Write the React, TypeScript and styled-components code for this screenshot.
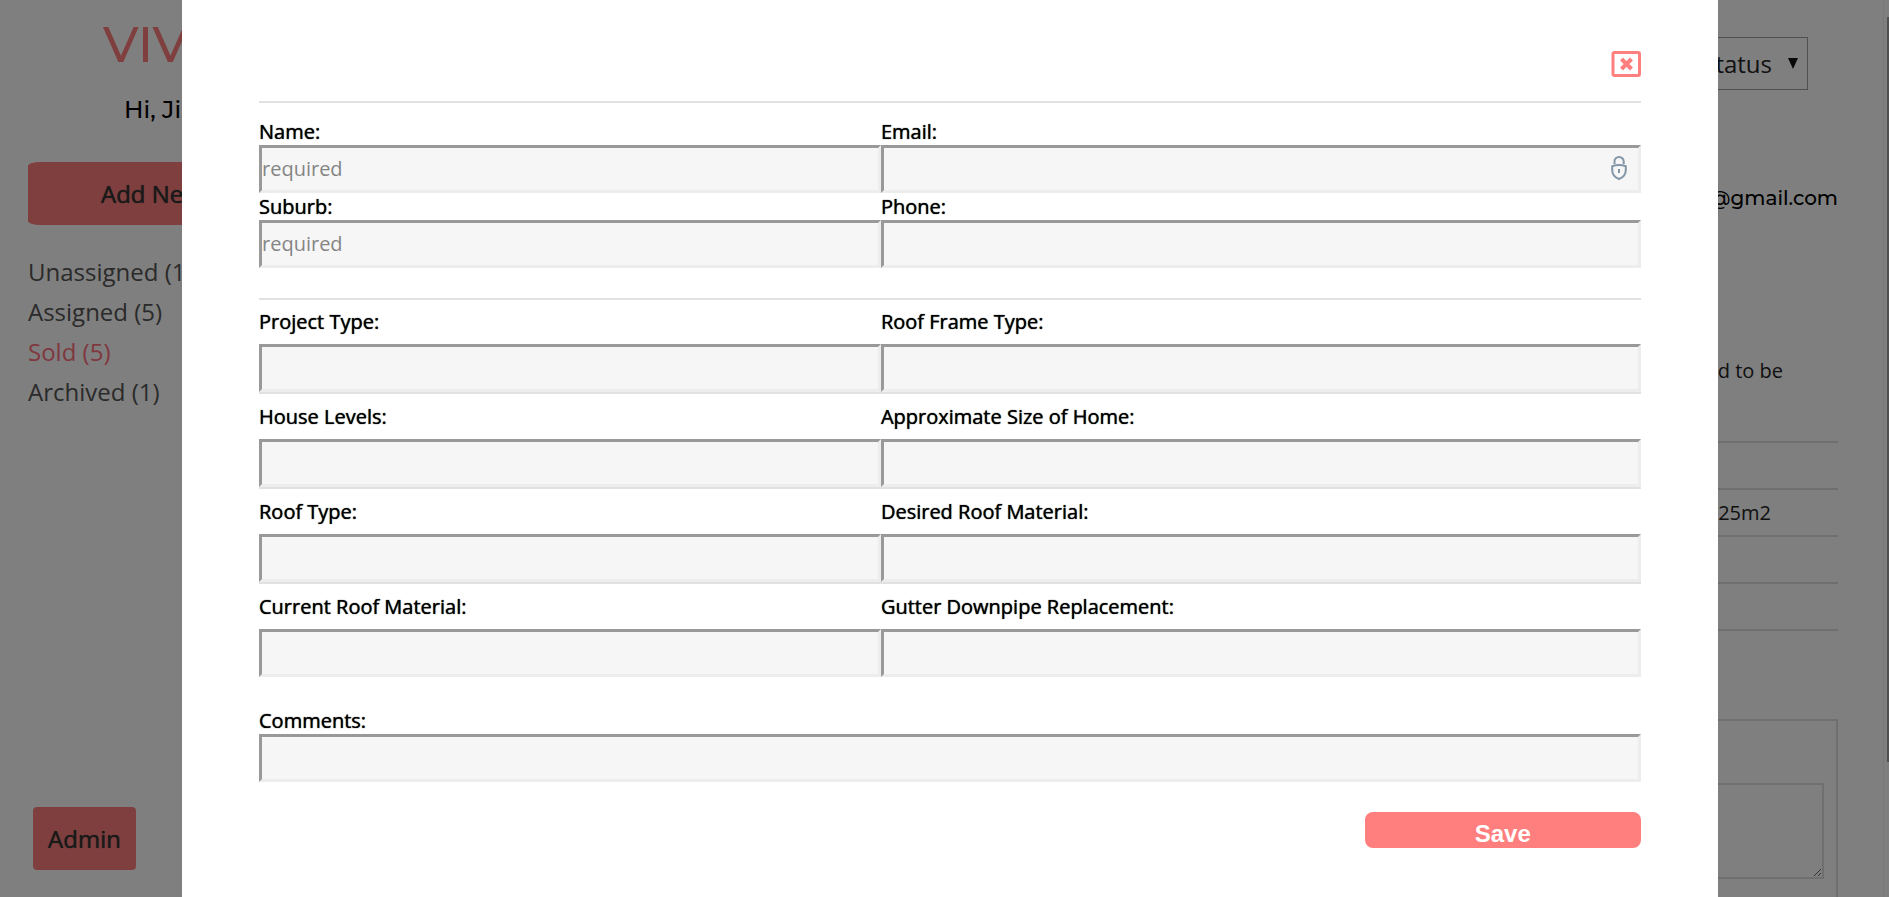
import React from "react";
import styled, { createGlobalStyle } from "styled-components";

const GlobalStyle = createGlobalStyle`
  * { box-sizing: border-box; }
  body { margin: 0; background: #fff; font-family: "Open Sans", sans-serif; overflow: hidden; }
`;

const Page = styled.div`
  display: flex;
  height: 100vh;
  overflow: hidden;
`;

const Sidebar = styled.aside`
  display: flex;
  flex-direction: column;
  width: 320px;
  padding: 17px 0 27px 28px;
`;

const Brand = styled.h1`
  margin: 0;
  padding-left: 75px;
  font: 500 50px/56px Montserrat, Lato, sans-serif;
  color: #ff7f7f;
`;

const Greeting = styled.p`
  margin: 22px 0 0;
  padding-left: 96px;
  font: 500 24px/30px Montserrat, "Open Sans", sans-serif;
  color: #000;
`;

const AddButton = styled.button`
  height: 63px;
  margin-top: 37px;
  padding: 0 0 0 73px;
  border: 0;
  border-radius: 12px / 4px;
  background: #ff7f7f;
  color: #333;
  font: 400 24px/32px "Open Sans", sans-serif;
  text-shadow: 0 0 1px #333;
  text-align: left;
`;

const Nav = styled.nav`
  display: flex;
  flex-direction: column;
  margin-top: 27px;
`;

const NavLink = styled.a<{ $active?: boolean }>`
  font-size: 24px;
  line-height: 40px;
  text-decoration: none;
  color: ${(p) => (p.$active ? "#ff7080" : "#555")};
`;

const AdminButton = styled.button`
  align-self: flex-start;
  width: 103px;
  height: 63px;
  margin: auto 0 0 5px;
  padding: 0;
  border: 0;
  border-radius: 4px;
  background: #ff7f7f;
  color: #333;
  font: 400 24px/32px "Open Sans", sans-serif;
  text-shadow: 0 0 1px #333;
`;

const Main = styled.main`
  flex: 1;
  display: flex;
  flex-direction: column;
  padding: 37px 45px 0 0;
`;

const SelectFrame = styled.div`
  align-self: flex-end;
  display: flex;
  align-items: center;
  width: 240px;
  height: 53px;
  margin-right: 30px;
  padding-right: 9px;
  border: 1px solid #a0a0a0;
`;

const StatusSelect = styled.select`
  flex: 1;
  appearance: none;
  border: 0;
  background: transparent;
  color: #222;
  font: 400 24px/34px "Open Sans", sans-serif;
  text-align: right;
  text-align-last: right;
  padding: 0 8px 0 0;
`;

const Contact = styled.p`
  margin: 93px 0 0;
  font: 500 20px/30px Montserrat, "Open Sans", sans-serif;
  color: #000;
  text-align: right;
`;

const Note = styled.p`
  margin: 143px 0 0;
  padding-right: 55px;
  font-size: 20px;
  line-height: 30px;
  color: #222;
  text-align: right;
`;

const Details = styled.ul`
  margin: 55px 0 0;
  padding: 0;
  list-style: none;
  border-bottom: 2px solid #dedede;
`;

const Detail = styled.li`
  height: 47px;
  padding-right: 67px;
  border-top: 2px solid #dedede;
  font-size: 20px;
  line-height: 45px;
  color: #222;
  text-align: right;
`;

const NoteBox = styled.section`
  flex: 1;
  margin-top: 88px;
  padding: 62px 12px 0;
  border: 2px solid #dedede;
  border-bottom: 0;
`;

const NoteArea = styled.textarea`
  display: block;
  width: 100%;
  height: 96px;
  border: 2px solid #dedede;
  background: transparent;
`;

const ScrollTrack = styled.div`
  width: 6px;
  padding: 17px 0 0 3px;
  border-left: 1px solid #f2f2f2;
`;

const ScrollThumb = styled.div`
  height: 745px;
  background: #a0a0a0;
`;

const Overlay = styled.div`
  position: fixed;
  inset: 0;
  display: flex;
  padding: 0 171px 0 182px;
  background: rgba(0, 0, 0, 0.5);
`;

const Modal = styled.div`
  flex: 1;
  padding: 51px 77px 0;
  background: #fff;
`;

const ModalHeader = styled.header`
  display: flex;
  justify-content: flex-end;
  height: 52px;
  border-bottom: 2px solid #e1e1e1;
`;

const CloseButton = styled.button`
  width: 30px;
  height: 26px;
  padding: 0;
  border: 0;
  background: none;
  svg { display: block; }
`;

const ContactFields = styled.div`
  padding: 15px 0 30px;
  border-bottom: 2px solid #e1e1e1;
`;

const ProjectFields = styled.div`
  display: grid;
  row-gap: 1px;
`;

const FieldRow = styled.div<{ $ruled?: boolean }>`
  display: grid;
  grid-template-columns: 45% 55%;
  border-bottom: ${(p) => (p.$ruled ? "2px solid #e1e1e1" : "0")};
`;

const FieldBox = styled.div`
  display: flex;
  flex-direction: column;
`;

const Label = styled.label<{ $roomy?: boolean }>`
  padding: ${(p) => (p.$roomy ? "8px 0 9px" : "0")};
  font-size: 20px;
  font-weight: 400;
  line-height: 27px;
  color: #000;
  text-shadow: 0 0 1px #000;
`;

const InputWrap = styled.div`
  position: relative;
  display: flex;
`;

const Input = styled.input`
  width: 100%;
  height: 48px;
  padding: 0 0 2px;
  border: 3px solid;
  border-color: #999 #ededed #ededed #999;
  border-radius: 0;
  background: #f6f6f6;
  font: 400 20px/28px "Open Sans", sans-serif;
  color: #000;
  &::placeholder { color: #858585; opacity: 1; }
`;

const LockMark = styled.svg`
  position: absolute;
  right: 14px;
  top: 10px;
`;

const Comments = styled.div`
  margin-top: 30px;
`;

const SaveButton = styled.button`
  display: block;
  width: 20%;
  height: 36px;
  margin: 30px 0 0 auto;
  padding: 8px 0 0;
  border: 0;
  border-radius: 8px;
  background: #ff7f7f;
  color: #fff;
  font: 700 24px/28px "Liberation Sans", Arial, sans-serif;
`;

const LockIcon = () => (
  <LockMark width="16" height="26" viewBox="0 0 16 26" fill="none" stroke="#8296a8" strokeWidth="2" aria-hidden="true">
    <path d="M3.5 9V6.5a4.6 4.6 0 0 1 9.2 0V9" />
    <path d="M1.2 11.2Q8 8.6 14.8 11.2V15c0 4.500-2.700 7.500-6.800 9-4.100-1.500-6.800-4.500-6.800-9Z" />
    <path d="M8 14v4" />
  </LockMark>
);

type FieldProps = { id: string; label: string; placeholder?: string; roomy?: boolean; lock?: boolean };

const Field = ({ id, label, placeholder, roomy, lock }: FieldProps) => (
  <FieldBox>
    <Label htmlFor={id} $roomy={roomy}>{label}</Label>
    <InputWrap>
      <Input id={id} type="text" placeholder={placeholder} />
      {lock && <LockIcon />}
    </InputWrap>
  </FieldBox>
);

const projectRows = [
  ["Project Type:", "Roof Frame Type:"],
  ["House Levels:", "Approximate Size of Home:"],
  ["Roof Type:", "Desired Roof Material:"],
  ["Current Roof Material:", "Gutter Downpipe Replacement:"],
];

const details = ["", "25m2", "", ""];

export default function App() {
  return (
    <>
      <GlobalStyle />
      <Page>
        <Sidebar>
          <Brand>VIV</Brand>
          <Greeting>Hi, Ji</Greeting>
          <AddButton type="button">Add Ne</AddButton>
          <Nav>
            <NavLink href="#unassigned">Unassigned (1</NavLink>
            <NavLink href="#assigned">Assigned (5)</NavLink>
            <NavLink href="#sold" $active>Sold (5)</NavLink>
            <NavLink href="#archived">Archived (1)</NavLink>
          </Nav>
          <AdminButton type="button">Admin</AdminButton>
        </Sidebar>
        <Main>
          <SelectFrame>
            <StatusSelect aria-label="Status"><option>tatus</option></StatusSelect>
            <svg width="18" height="12" viewBox="0 0 18 12" aria-hidden="true"><path d="M8 0h10l-5 11z" fill="#111" /></svg>
          </SelectFrame>
          <Contact>@gmail.com</Contact>
          <Note>d to be</Note>
          <Details>
            {details.map((text, i) => <Detail key={i}>{text}</Detail>)}
          </Details>
          <NoteBox><NoteArea aria-label="Note" /></NoteBox>
        </Main>
        <ScrollTrack><ScrollThumb /></ScrollTrack>
      </Page>
      <Overlay>
        <Modal role="dialog" aria-modal="true">
          <ModalHeader>
            <CloseButton type="button" aria-label="Close">
              <svg width="30" height="26" viewBox="0 0 30 26" fill="none" stroke="#ff7f7f">
                <rect x="2" y="1.500" width="26.500" height="23" rx="1.500" strokeWidth="3" />
                <path d="M10.500 8l10 10M20.500 8l-10 10" strokeWidth="4" />
              </svg>
            </CloseButton>
          </ModalHeader>
          <form>
            <ContactFields>
              <FieldRow>
                <Field id="name" label="Name:" placeholder="required" />
                <Field id="email" label="Email:" lock />
              </FieldRow>
              <FieldRow>
                <Field id="suburb" label="Suburb:" placeholder="required" />
                <Field id="phone" label="Phone:" />
              </FieldRow>
            </ContactFields>
            <ProjectFields>
              {projectRows.map(([left, right], i) => (
                <FieldRow key={left} $ruled={i < projectRows.length - 1}>
                  <Field id={`left-${i}`} label={left} roomy />
                  <Field id={`right-${i}`} label={right} roomy />
                </FieldRow>
              ))}
            </ProjectFields>
            <Comments>
              <Field id="comments" label="Comments:" />
            </Comments>
            <SaveButton type="button">Save</SaveButton>
          </form>
        </Modal>
      </Overlay>
    </>
  );
}
